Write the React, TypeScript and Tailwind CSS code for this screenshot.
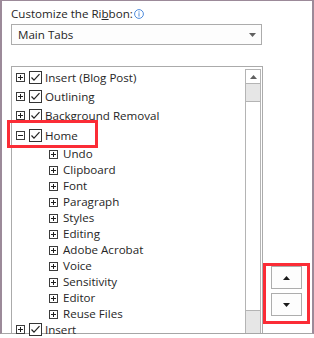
import React from "react"

const PlusBox = ({ minus = false }: { minus?: boolean }) => (
  <svg width="9" height="9" viewBox="0 0 9 9" className="shrink-0">
    <rect x="0.5" y="0.5" width="8" height="8" fill="white" stroke="#3c3c3c" />
    <line x1="2" y1="4.5" x2="7" y2="4.5" stroke="#1e1e1e" />
    {!minus && <line x1="4.5" y1="2" x2="4.5" y2="7" stroke="#1e1e1e" />}
  </svg>
)

const Check = () => (
  <svg width="13" height="13" viewBox="0 0 13 13" className="shrink-0">
    <rect x="0.5" y="0.5" width="12" height="12" fill="white" stroke="#333" />
    <path d="M2.5 6.5 L5 9.2 L10.5 3.2" fill="none" stroke="#222" strokeWidth="1.2" />
  </svg>
)

const Tri = ({ down = false, color = "#1a1a1a" }: { down?: boolean; color?: string }) => (
  <svg width="7" height="4" viewBox="0 0 7 4">
    <path d={down ? "M0 0 L7 0 L3.5 4 Z" : "M0 4 L7 4 L3.5 0 Z"} fill={color} />
  </svg>
)

const top1 = ["Insert (Blog Post)", "Outlining", "Background Removal"]
const subs = ["Undo", "Clipboard", "Font", "Paragraph", "Styles", "Editing", "Adobe Acrobat", "Voice", "Sensitivity", "Editor", "Reuse Files"]

const TopRow = ({ label, minus = false, h = "h-[19px]" }: { label: string; minus?: boolean; h?: string }) => (
  <div className={`flex items-center ${h} pl-[4px]`}>
    <PlusBox minus={minus} />
    <div className="ml-[4px]"><Check /></div>
    <span className="ml-[3px] whitespace-nowrap">{label}</span>
  </div>
)

export default function App() {
  return (
    <div className="w-[314px] h-[338px] bg-white text-[11.6px] leading-[16px] text-[#262626] font-['Open_Sans',sans-serif]">
      <div className="relative h-[334px] border-x-2 border-t border-[#9c8a99] border-b border-b-[#a6a6a6] pl-[9px] pt-[5px]">
        <div className="flex items-center">
          <span>
            Customize the Ri<span className="underline">b</span>bon:
          </span>
          <svg width="10" height="10" viewBox="0 0 10 10" className="ml-[1px]">
            <circle cx="5" cy="5" r="4.4" fill="none" stroke="#3b7fd8" strokeWidth="0.9" />
            <circle cx="5" cy="2.9" r="0.6" fill="#3b7fd8" />
            <line x1="5" y1="4.2" x2="5" y2="7.6" stroke="#3b7fd8" strokeWidth="0.9" />
          </svg>
        </div>

        <div className="mt-[2px] flex h-[21px] w-[251px] items-center justify-between border border-[#acacac] bg-[#fdfdfd] pl-[6px] pr-[5px]">
          <span>Main Tabs</span>
          <Tri down color="#606060" />
        </div>

        <div className="mt-[21px] flex">
          <div className="flex h-[267px] w-[252px] border-x border-t border-[#ababab]">
            <div className="flex-1 pt-[1px]">
              {top1.map((t) => (
                <TopRow key={t} label={t} />
              ))}
              <TopRow label="Home" minus h="h-[21px]" />
              {subs.map((s) => (
                <div key={s} className="flex h-[16px] items-center pl-[37px]">
                  <PlusBox />
                  <span className="ml-[5px] whitespace-nowrap">{s}</span>
                </div>
              ))}
              <TopRow label="Insert" h="h-[15px]" />
            </div>
            <div className="mr-[1px] mt-[2px] flex w-[16px] flex-col border-x border-[#b4b4b4]">
              <div className="flex h-[15px] items-center justify-center border-y border-[#b4b4b4]">
                <Tri color="#606060" />
              </div>
              <div className="h-[17px] bg-[#e6e6e6]" />
              <div className="h-[210px] border-y border-[#b4b4b4] bg-white" />
              <div className="flex-1 bg-[#e6e6e6]" />
            </div>
          </div>

          <div className="flex flex-col justify-end gap-[4px] pb-[17px] pl-[8px]">
            <div className="flex h-[23px] w-[31px] items-center justify-center border border-[#adadad] bg-[#fdfdfd]">
              <Tri />
            </div>
            <div className="flex h-[23px] w-[31px] items-center justify-center border border-[#adadad] bg-[#fdfdfd]">
              <Tri down />
            </div>
          </div>
        </div>

        <div className="absolute left-[5px] top-[119px] h-[28px] w-[91px] border-[3px] border-red-500" />
        <div className="absolute left-[261px] top-[262px] h-[61px] w-[47px] border-[3px] border-red-500" />
      </div>
    </div>
  )
}
